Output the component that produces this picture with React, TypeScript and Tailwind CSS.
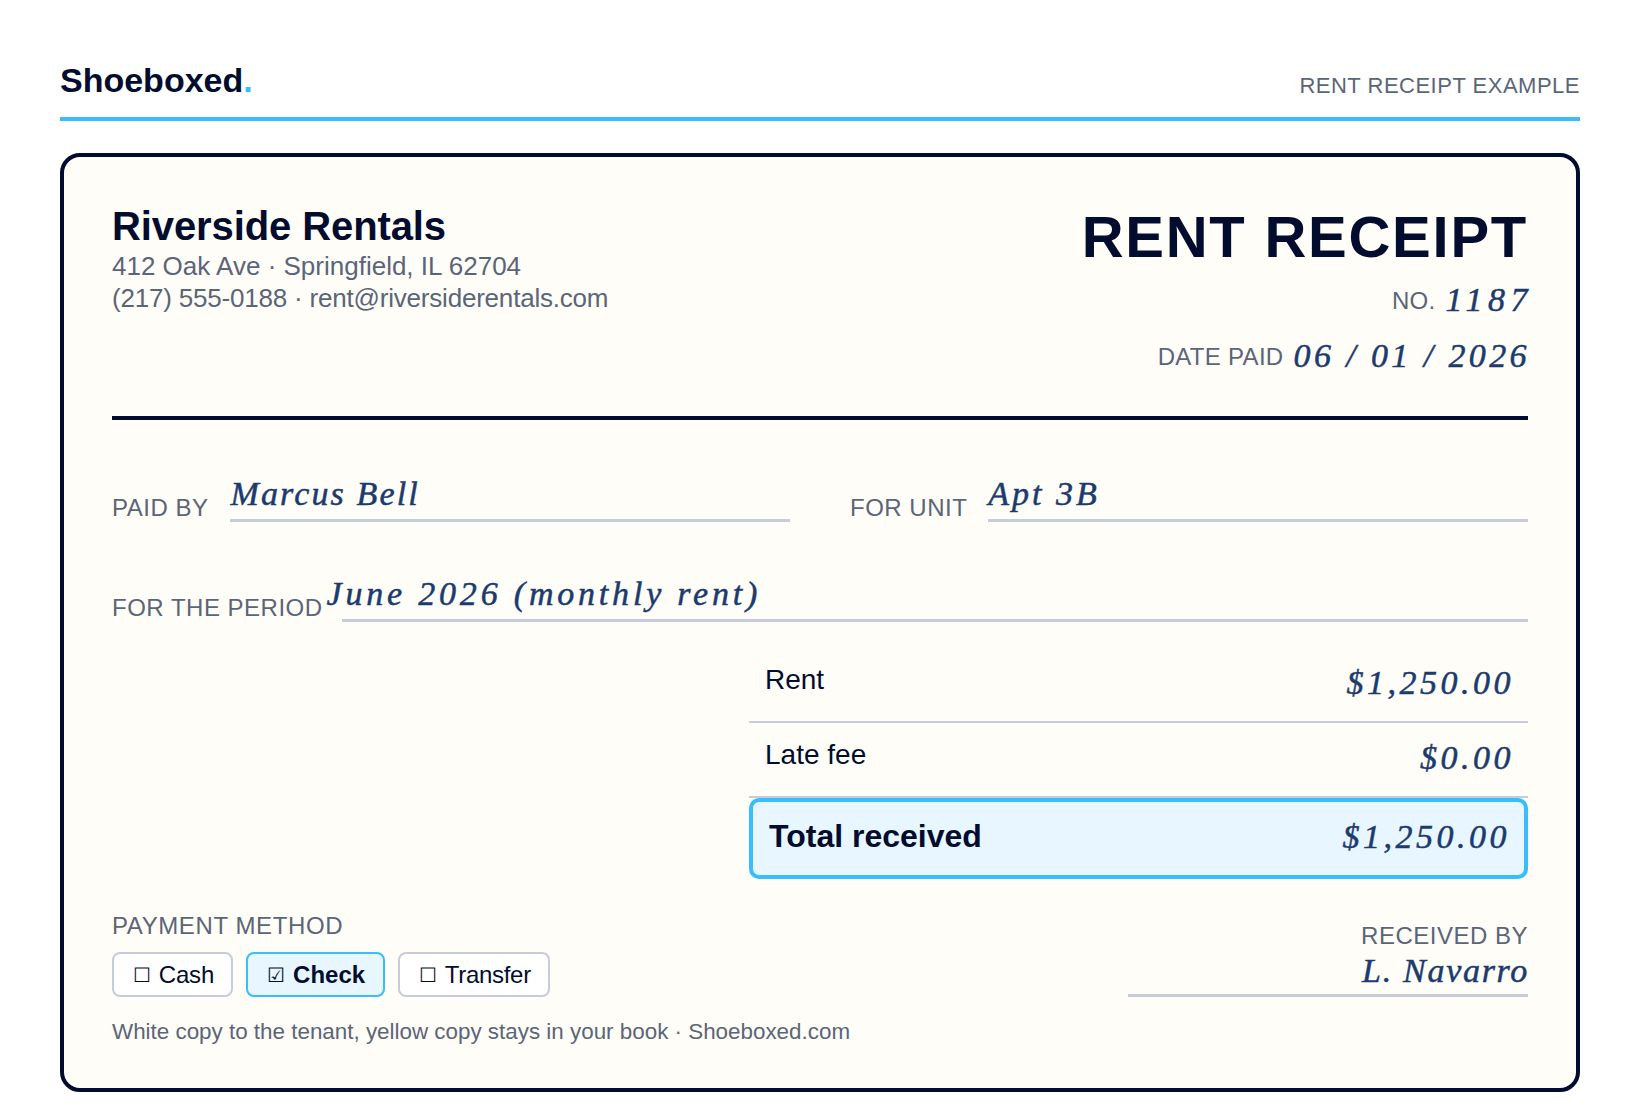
const sans = "font-['Liberation_Sans',Arial,sans-serif]";
const hand = "[font-family:'Liberation_Serif',serif] italic text-[#1b3a6e] [-webkit-text-stroke:0.5px_#1b3a6e] text-[34px] whitespace-nowrap";

function Field({ label, value, width, labelGap, valueClass }: { label: string; value: string; width: string; labelGap: string; valueClass: string }) {
  return (
    <div className={"flex items-end " + width}>
      <span className={"text-[24px] leading-[28px] tracking-[0.5px] text-[#5b6578] whitespace-nowrap " + labelGap}>{label}</span>
      <div className="flex-1 border-b-[3px] border-[#c6ccda] h-[48px] flex items-start">
        <span className={hand + " leading-[40px] " + valueClass}>{value}</span>
      </div>
    </div>
  );
}

function Amount({ label, value }: { label: string; value: string }) {
  return (
    <div className="h-[75px] border-b-2 border-[#c6ccda] flex items-start justify-between px-[16px] pt-[14px]">
      <span className="text-[28px] leading-[36px] text-[#020c2e]">{label}</span>
      <span className={hand + " leading-[40px] tracking-[3.5px] mr-[-2px] translate-y-[1px]"}>{value}</span>
    </div>
  );
}

function Pill({ label, active, className = "" }: { label: string; active?: boolean; className?: string }) {
  return (
    <div className={"h-[45px] flex items-center gap-[8px] pl-[19px] rounded-[8px] border-2 text-[24px] text-[#020c2e] " + (active ? "border-[#38bdfd] bg-[#e8f6ff] font-bold " : "border-[#c6ccda] bg-white ") + className}>
      <span className="text-[20px] font-normal">{active ? "☑" : "☐"}</span>
      <span>{label}</span>
    </div>
  );
}

export default function App() {
  return (
    <div className={sans + " w-[1640px] h-[1120px] bg-white px-[60px] pt-[60px] text-[#020c2e]"}>
      <div className="flex items-center justify-between h-[57px] border-b-4 border-[#38bdfd] box-content">
        <div className="text-[34px] leading-[40px] font-bold mt-[-18px]">
          Shoeboxed<span className="text-[#38bdfd]">.</span>
        </div>
        <div className="text-[22px] leading-[28px] tracking-[0.5px] text-[#5b6578] mt-[-6px]">RENT RECEIPT EXAMPLE</div>
      </div>

      <div className="mt-[32px] h-[939px] border-4 border-[#020c2e] rounded-[20px] bg-[#fffdf7] px-[48px] pt-[46px]">
        <div className="flex justify-between h-[213px] border-b-4 border-[#020c2e] box-content">
          <div>
            <div className="text-[40px] leading-[46px] font-bold tracking-[-0.1px]">Riverside Rentals</div>
            <div className="text-[26px] leading-[32.5px] text-[#5b6578] mt-[1px]">412 Oak Ave · Springfield, IL 62704</div>
            <div className="text-[26px] leading-[32.5px] tracking-[-0.2px] text-[#5b6578] mt-[-1px]">(217) 555-0188 · rent@riversiderentals.com</div>
          </div>
          <div className="flex flex-col items-end">
            <div className="text-[58px] leading-[64px] font-bold tracking-[1.75px] mt-[2px]">RENT RECEIPT</div>
            <div className="flex items-baseline gap-[10px] mt-[9px] text-[24px] tracking-[0.3px] text-[#5b6578]">
              <span>NO.</span>
              <span className={hand + " leading-[40px] tracking-[5.5px] mr-[-5px] translate-y-[2px]"}>1187</span>
            </div>
            <div className="flex items-baseline gap-[10px] mt-[15px] text-[24px] tracking-[0.3px] text-[#5b6578]">
              <span>DATE PAID</span>
              <span className={hand + " leading-[40px] tracking-[3.4px] mr-[-2px] translate-y-[2px]"}>06 / 01 / 2026</span>
            </div>
          </div>
        </div>

        <div className="flex gap-[60px] mt-[54px]">
          <Field label="PAID BY" value="Marcus Bell" width="w-[678px]" labelGap="mr-[22px]" valueClass="tracking-[2.15px]" />
          <Field label="FOR UNIT" value="Apt 3B" width="flex-1" labelGap="mr-[21px]" valueClass="tracking-[3px]" />
        </div>
        <div className="mt-[52px]">
          <Field label="FOR THE PERIOD" value="June 2026 (monthly rent)" width="w-full" labelGap="mr-[19px]" valueClass="ml-[-15px] tracking-[3.8px]" />
        </div>

        <div className="ml-[637px] mt-[26px]">
          <Amount label="Rent" value="$1,250.00" />
          <Amount label="Late fee" value="$0.00" />
          <div className="h-[81px] rounded-[10px] border-4 border-[#38bdfd] bg-[#e8f6ff] flex items-start justify-between px-[16px] pt-[14px]">
            <span className="text-[32px] leading-[40px] font-bold">Total received</span>
            <span className={hand + " leading-[40px] tracking-[3.5px] mr-[-2px] translate-y-[1px]"}>$1,250.00</span>
          </div>
        </div>

        <div className="flex justify-between items-start mt-[33px]">
          <div>
            <div className="text-[24px] leading-[28px] tracking-[0.6px] text-[#5b6578]">PAYMENT METHOD</div>
            <div className="flex gap-[13px] mt-[12px]">
              <Pill label="Cash" className="pr-[17px] tracking-[-0.2px]" />
              <Pill label="Check" active className="pr-[18px]" />
              <Pill label="Transfer" className="pr-[17px] tracking-[-0.3px]" />
            </div>
            <div className="mt-[21px] text-[22.4px] leading-[28px] text-[#5b6578]">White copy to the tenant, yellow copy stays in your book · Shoeboxed.com</div>
          </div>
          <div className="w-[400px] mt-[10px]">
            <div className="text-right text-[24px] leading-[28px] tracking-[0.5px] text-[#5b6578]">RECEIVED BY</div>
            <div className={hand + " text-right leading-[36px] mt-[3px] tracking-[1.7px] mr-[-1px]"}>L. Navarro</div>
            <div className="h-[3px] bg-[#c6ccda] mt-[5px]" />
          </div>
        </div>
      </div>
    </div>
  );
}
